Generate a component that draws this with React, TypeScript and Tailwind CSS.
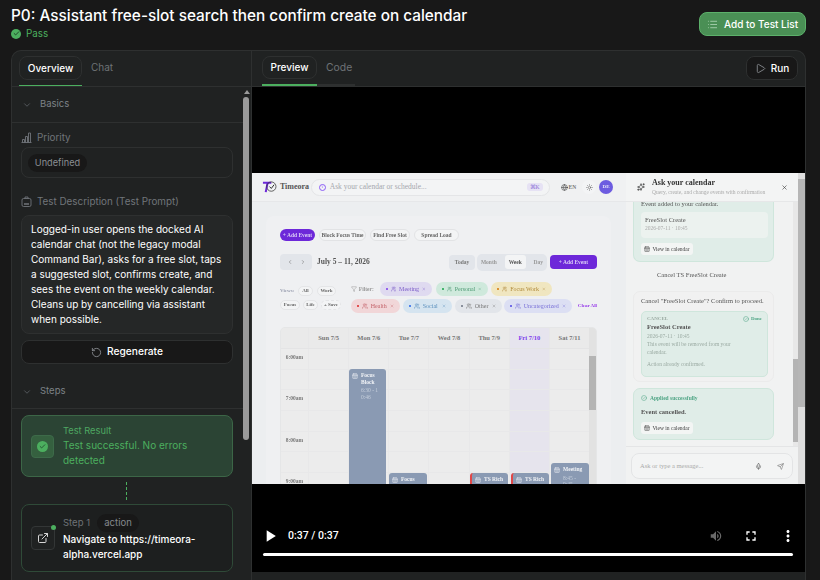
import { CalendarDays, Check, ChevronDown, ChevronLeft, ChevronRight, CircleCheck, ExternalLink, Filter, Globe, List, Mic, Play, RotateCw, Send, Sun, Users, X, Sparkles } from "lucide-react";
import { MdFullscreen, MdMoreVert, MdPlayArrow, MdVolumeUp } from "react-icons/md";
import type { ReactNode } from "react";

const sans = "font-['Inter','Liberation_Sans',sans-serif]";
const serif = "font-['Liberation_Serif',serif]";

function FilterPill({ label, className, dot }: { label: string; className: string; dot: string }) {
  return (
    <div className={`flex h-[14px] items-center gap-[3px] rounded-full px-[6px] text-[6px] ${className}`}>
      <span className={`size-[2px] rounded-full ${dot}`} />
      <Users className="size-[6px]" />
      <span className="flex-1 whitespace-nowrap">{label}</span>
      <X className="size-[4px]" />
    </div>
  );
}

function ViewPill({ label, className = "" }: { label: string; className?: string }) {
  return (
    <div className={`flex h-[10px] items-center justify-center rounded-full border border-[#e4e5e7] bg-[#f3f4f5] text-[5px] font-bold text-[#666] ${className}`}>
      {label}
    </div>
  );
}

function EventBlock({ title, time, className }: { title: string; time?: string; className: string }) {
  return (
    <div className={`absolute rounded-[3px] bg-[#8a9ab3] px-[3px] py-[3px] text-[5.5px] font-bold leading-[6.5px] text-[#f1f3f6] ${className}`}>
      <div className="flex gap-[3px]">
        <CalendarDays className="mt-[1px] size-[6px] shrink-0" />
        <div>
          {title}
          {time && <div className="mt-[2px] font-normal text-[#c5cedb]">{time}</div>}
        </div>
      </div>
    </div>
  );
}

function ViewInCalendar() {
  return (
    <div className="flex h-[12px] w-[52px] items-center justify-center gap-[2px] rounded-[3px] bg-[#f3f5f4] text-[5.5px] text-[#444]">
      <CalendarDays className="size-[6px]" />
      View in calendar
    </div>
  );
}

function CalendarGrid() {
  const days = ["Sun 7/5", "Mon 7/6", "Tue 7/7", "Wed 7/8", "Thu 7/9", "Fri 7/10", "Sat 7/11"];
  const hours = ["6:00am", "", "7:00am", "", "8:00am", "", "9:00am", ""];
  return (
    <div className="mt-[14px] flex h-[170px] w-[317px] overflow-hidden rounded-t-[5px] border border-[#e5e6e7] bg-[#ececec]">
      <div className="w-[310px]">
        <div className="grid h-[21px] grid-cols-[27px_repeat(7,1fr)] border-b border-[#e4e4e5] bg-[#eaeaea] text-center text-[6.5px] font-bold leading-[20px] text-[#777]">
          <div />
          {days.map((d) => (
            <div key={d} className={`border-l border-[#e7e7e8] whitespace-nowrap ${d === "Fri 7/10" ? "bg-[#e6e4ee] text-[#7c3aed]" : ""}`}>
              {d}
            </div>
          ))}
        </div>
        <div className="relative">
          {hours.map((h, i) => (
            <div key={i} className="grid h-[20.7px] grid-cols-[27px_repeat(7,1fr)] border-b border-[#e8e8e9]">
              <div className="text-center text-[5.5px] font-bold leading-[16px] text-[#777]">{h}</div>
              {days.map((d) => (
                <div key={d} className={`border-l border-[#e8e8e9] ${d === "Fri 7/10" ? "bg-[#e6e4ed]" : ""}`} />
              ))}
            </div>
          ))}
          <EventBlock title="Focus Block" time="6:30 - 1 0:46" className="left-[68px] top-[20px] h-[130px] w-[37px]" />
          <EventBlock title="Focus" className="left-[108px] top-[124px] h-[30px] w-[38px]" />
          <EventBlock title="TS Rich" className="left-[189px] top-[124px] h-[30px] w-[38px] border-l-2 border-l-[#e04848]" />
          <EventBlock title="TS Rich" className="left-[230px] top-[124px] h-[30px] w-[38px] border-l-2 border-l-[#e04848]" />
          <EventBlock title="Meeting" time="8:45 - 9:45" className="left-[270px] top-[114px] h-[40px] w-[38px]" />
        </div>
      </div>
      <div className="flex w-[7px] flex-col bg-[#e2e2e2] pt-[28px]">
        <div className="h-[54px] bg-[#b4b4b4]" />
      </div>
    </div>
  );
}

function CalendarMain() {
  return (
    <div className="flex w-[374px] flex-col bg-[#eceef0]">
      <div className="flex h-[29px] shrink-0 items-center border-b border-[#e6e7e9] bg-[#f0f1f2] pl-[10px] pr-[13px]">
        <svg viewBox="0 0 16 16" className="size-[15px]">
          <path d="M1 3h9M6 3L4 13" stroke="#6d28d9" strokeWidth="2.2" fill="none" />
          <circle cx="10" cy="7" r="5" stroke="#333" strokeWidth="0.8" fill="none" />
          <path d="M8 7l2 2 3-4" stroke="#222" strokeWidth="1" fill="none" />
        </svg>
        <span className="ml-[3px] w-[31px] text-[8px] font-bold text-[#555]">Timeora</span>
        <div className="flex h-[17px] w-[240px] items-center rounded-full border border-[#e4e5e7] bg-[#f3f4f5] pl-[7px] pr-[6px] text-[7.5px] text-[#a5a7ad]">
          <span className="flex size-[7px] items-center justify-center rounded-full border border-[#8b5cf6] text-[4px] text-[#7c3aed]">i</span>
          <span className="ml-[4px] flex-1">Ask your calendar or schedule...</span>
          <span className="rounded-[3px] bg-[#e6e2f4] px-[3px] text-[5.5px] text-[#8b6fd6]">⌘K</span>
        </div>
        <Globe className="ml-[11px] size-[7px] text-[#444]" />
        <span className="ml-[1px] text-[5.5px] font-bold text-[#777]">EN</span>
        <div className="ml-[6px] flex size-[14px] items-center justify-center rounded-full bg-[#f3f4f5]">
          <Sun className="size-[7px] text-[#666]" />
        </div>
        <div className="ml-[3px] flex size-[14px] items-center justify-center rounded-full bg-[#6d5ce0] text-[5px] font-bold text-[#e8e4fa]">DE</div>
      </div>
      <div className="ml-[14px] mt-[14px] h-[300px] w-[345px] rounded-[8px] bg-[#eff0f2] px-[14px] pt-[13px]">
        <div className="flex items-center gap-[4px] text-[5.5px] font-bold text-[#666]">
          <div className="flex h-[12px] w-[35px] items-center justify-center rounded-full bg-[#6d28d9] text-[#d9cbf6]">+ Add Event</div>
          <div className="flex h-[12px] w-[47px] items-center justify-center rounded-full border border-[#e2e3e5] bg-[#f3f4f5]">Block Focus Time</div>
          <div className="flex h-[12px] w-[40px] items-center justify-center rounded-full border border-[#e2e3e5] bg-[#f3f4f5]">Find Free Slot</div>
          <div className="flex h-[12px] w-[45px] items-center justify-center rounded-full border border-[#e2e3e5] bg-[#f3f4f5]">Spread Load</div>
        </div>
        <div className="mt-[13px] flex h-[16px] items-center">
          <div className="flex h-[16px] w-[32px] items-center justify-around rounded-[4px] bg-[#e2e5ea] px-[3px] text-[#666]">
            <ChevronLeft className="size-[6px]" />
            <ChevronRight className="size-[6px]" />
          </div>
          <span className="ml-[5px] text-[7.5px] font-bold text-[#555]">July 5 – 11, 2026</span>
          <div className="ml-auto flex h-[15px] w-[26px] items-center justify-center rounded-[4px] bg-[#e2e5ea] text-[5.5px] font-bold text-[#777]">Today</div>
          <div className="ml-[2px] flex h-[17px] w-[70px] items-center justify-around rounded-[5px] bg-[#e2e5ea] text-[5.5px] font-bold text-[#999]">
            <span>Month</span>
            <span className="rounded-[3px] bg-[#f3f4f5] px-[4px] py-[3px] text-[#555]">Week</span>
            <span>Day</span>
          </div>
          <div className="ml-[3px] flex h-[14px] w-[47px] items-center justify-center gap-[2px] rounded-[4px] bg-[#6d28d9] text-[5.5px] font-bold text-[#d9cbf6]">+ Add Event</div>
        </div>
        <div className="mt-[12px] flex">
          <div className="w-[72px] pt-[4px]">
            <div className="flex items-center gap-[4px]">
              <span className="w-[14px] text-[5px] font-bold text-[#9a9fb0]">Views:</span>
              <ViewPill label="All" className="w-[15px]" />
              <ViewPill label="Work" className="w-[19px]" />
            </div>
            <div className="mt-[4px] flex items-center gap-[3px]">
              <ViewPill label="Focus" className="w-[20px]" />
              <ViewPill label="Life" className="w-[15px]" />
              <ViewPill label="+ Save" className="w-[20px] border-dashed border-[#c9b8ee] text-[#8b5cf6]" />
            </div>
          </div>
          <div className="flex-1">
            <div className="flex items-center">
              <Filter className="size-[6px] text-[#999]" />
              <span className="ml-[2px] w-[21px] text-[5.5px] font-bold text-[#999]">Filter:</span>
              <FilterPill label="Meeting" dot="bg-[#7c3aed]" className="w-[52px] bg-[#dfdaf0] text-[#7c5cc9]" />
              <FilterPill label="Personal" dot="bg-[#16a34a]" className="ml-[4px] w-[52px] bg-[#cfe9dc] text-[#4f9b75]" />
              <FilterPill label="Focus Work" dot="bg-[#d97706]" className="ml-[3px] w-[61px] bg-[#f0e6c0] text-[#b08a3a]" />
            </div>
            <div className="mt-[3px] flex items-center">
              <FilterPill label="Health" dot="bg-[#dc2626]" className="w-[49px] bg-[#f1d6d8] text-[#c4636a]" />
              <FilterPill label="Social" dot="bg-[#2563eb]" className="ml-[3px] w-[49px] bg-[#d5e4f0] text-[#5b8fbd]" />
              <FilterPill label="Other" dot="bg-[#6b7280]" className="ml-[3px] w-[47px] bg-[#e2e5ea] text-[#777]" />
              <FilterPill label="Uncategorized" dot="bg-[#4f46e5]" className="ml-[2px] w-[68px] bg-[#dcdff3] text-[#7a72d8]" />
              <span className="ml-[6px] whitespace-nowrap text-[5px] font-bold text-[#9333ea]">Clear All</span>
            </div>
          </div>
        </div>
        <CalendarGrid />
      </div>
    </div>
  );
}

function ChatPanel() {
  return (
    <div className="flex w-[172px] flex-col bg-[#f1f2f2] text-[#555]">
      <div className="flex h-[29px] shrink-0 items-center border-b border-[#e6e7e8] bg-[#f3f4f4] pl-[11px] pr-[10px]">
        <Sparkles className="size-[8px] text-[#333]" />
        <div className="ml-[7px] flex-1">
          <div className="text-[8px] font-bold leading-[10px] text-[#333]">Ask your calendar</div>
          <div className="text-[5.5px] leading-[8px] text-[#aaa]">Query, create, and change events with confirmation</div>
        </div>
        <X className="size-[7px] text-[#333]" />
      </div>
      <div className="flex h-[245px] shrink-0 overflow-hidden border-b border-[#e4e5e6]">
        <div className="w-[167px] pl-[7px]">
          <div className="h-[60px] w-[141px] rounded-b-[7px] border border-t-0 border-[#cfe6dc] bg-[#e0ede8] px-[7px]">
            <div className="h-[10px] text-[6.5px] leading-[3px] text-[#555]">Event added to your calendar.</div>
            <div className="h-[26px] w-[127px] rounded-[4px] bg-[#ecf2ef] px-[4px] py-[4px] text-[6.5px] leading-[8px] text-[#555]">
              FreeSlot Create
              <div className="text-[5.5px] text-[#aaa]">2026-07-11 · 10:45</div>
            </div>
            <div className="mt-[5px]">
              <ViewInCalendar />
            </div>
          </div>
          <div className="mt-[9px] pl-[24px] text-[6.5px] leading-[8px]">Cancel TS FreeSlot Create</div>
          <div className="mt-[12px] h-[91px] w-[141px] rounded-[7px] border border-[#ebebeb] bg-[#f1f1f1] px-[7px] pt-[5px]">
            <div className="text-[6.5px] leading-[8px]">Cancel "FreeSlot Create"? Confirm to proceed.</div>
            <div className="mt-[6px] h-[66px] w-[127px] rounded-[5px] border border-[#cfe6dc] bg-[#e0ede8] px-[5px] pt-[3px] text-[5.5px] leading-[8px] text-[#9aaaa2]">
              <div className="flex items-center justify-between text-[5px] font-bold">
                CANCEL
                <span className="flex items-center gap-[2px] text-[#4fa585]">
                  <CircleCheck className="size-[6px]" />
                  Done
                </span>
              </div>
              <div className="text-[6.5px] font-bold text-[#555]">FreeSlot Create</div>
              <div className="mt-[1px]">2026-07-11 · 10:45</div>
              <div className="w-[92px]">This event will be removed from your calendar.</div>
              <div className="mt-[4px]">Action already confirmed.</div>
            </div>
          </div>
          <div className="mt-[6px] h-[52px] w-[141px] rounded-[7px] border border-[#cfe6dc] bg-[#e0ede8] px-[7px] pt-[5px]">
            <div className="flex items-center gap-[3px] text-[5.5px] font-bold leading-[8px] text-[#4fa585]">
              <CircleCheck className="size-[6px]" />
              Applied successfully
            </div>
            <div className="mt-[6px] text-[6.5px] font-bold leading-[8px] text-[#555]">Event cancelled.</div>
            <div className="mt-[6px]">
              <ViewInCalendar />
            </div>
          </div>
        </div>
        <div className="flex w-[5px] flex-col justify-end bg-[#e8e8e8] pb-[4px]">
          <div className="h-[83px] bg-[#b4b4b4]" />
        </div>
      </div>
      <div className="mx-[5px] mt-[6px] flex h-[26px] items-center rounded-[8px] border border-[#e3e4e5] bg-[#f3f4f4] pl-[8px] pr-[8px] text-[6.5px] text-[#aaa]">
        <span className="flex-1">Ask or type a message...</span>
        <Mic className="size-[7px] text-[#555]" />
        <Send className="ml-[15px] size-[7px] text-[#777]" />
      </div>
    </div>
  );
}

function VideoPlayer() {
  return (
    <div className="flex h-[485px] flex-col bg-black">
      <div className="mt-[86px] flex h-[311px] shrink-0 overflow-hidden">
        <div className={`flex h-[311px] w-[546px] blur-[0.6px] ${serif}`}>
          <CalendarMain />
          <ChatPanel />
        </div>
        <div className="flex w-[8px] flex-col bg-[#dedede] pt-[6px]">
          <div className="h-[228px] bg-[#b6b6b6]" />
        </div>
      </div>
      <div className="flex h-[88px] flex-col justify-end px-[11px] pb-[16px]">
        <div className="flex items-center text-white">
          <MdPlayArrow className="-ml-[3px] size-[20px]" />
          <span className="ml-[8px] font-['Roboto',sans-serif] text-[10.5px] font-medium">0:37 / 0:37</span>
          <MdVolumeUp className="ml-auto size-[14px] text-[#6a6a6a]" />
          <MdFullscreen className="ml-[20px] size-[16px]" />
          <MdMoreVert className="ml-[20px] -mr-[3px] size-[18px]" />
        </div>
        <div className="mt-[7px] h-[3px] w-[530px] rounded-full bg-white" />
      </div>
    </div>
  );
}

function SectionHead({ label }: { label: string }) {
  return (
    <div className="flex items-center gap-[8px] px-[10px] text-[9.5px] text-[#7d8287]">
      <ChevronDown className="size-[10px] text-[#5c6065]" />
      {label}
    </div>
  );
}

function FieldLabel({ icon, label }: { icon: ReactNode; label: string }) {
  return (
    <div className="flex items-center gap-[5px] text-[9.85px] leading-[16px] text-[#70757a]">
      {icon}
      {label}
    </div>
  );
}

function PriorityIcon() {
  return (
    <svg viewBox="0 0 11 11" className="size-[11px]" fill="none" stroke="currentColor" strokeWidth="0.9">
      <path d="M0.5 10.5h10" />
      <path d="M1.5 10.5V7.5h2v3M4.5 10.5V4.5h2v6M7.5 10.5V1h2v9.5" />
    </svg>
  );
}

function PromptIcon() {
  return (
    <svg viewBox="0 0 11 11" className="size-[11px]" fill="none" stroke="currentColor" strokeWidth="0.9">
      <rect x="1" y="2.5" width="9" height="8" rx="1.5" />
      <path d="M4 2.5V1h3v1.5" />
      <path d="M3 8h5" strokeWidth="1.6" />
    </svg>
  );
}

function LeftPanel() {
  return (
    <div className="flex w-[240px] shrink-0 flex-col border-r border-[#2e3030]">
      <div className="flex h-[36px] shrink-0 items-start gap-[9px] border-b border-[#2e3030] pl-[7px] pt-[5px]">
        <div className="relative flex h-[24px] w-[63px] items-center justify-center rounded-lg border border-[#2e3030] text-[10px] font-medium text-white">
          Overview
          <div className="absolute -bottom-[7px] -left-px -right-px h-[1px] bg-[#4caf5f]" />
        </div>
        <span className="pt-[4px] text-[10px] text-[#6e7276]">Chat</span>
      </div>
      <div className="flex min-h-0 flex-1">
        <div className="w-[231px] shrink-0">
          <div className="flex h-[36px] flex-col justify-center border-b border-[#2e3030]">
            <SectionHead label="Basics" />
          </div>
          <div className="pl-[9px] pr-[10px] pt-[6px]">
            <FieldLabel icon={<PriorityIcon />} label="Priority" />
            <div className="mt-[2px] flex h-[31px] items-center rounded-lg border border-[#2e3030] px-[6px]">
              <span className="flex h-[18px] w-[59px] items-center justify-center rounded-full bg-[#181818] text-[9.2px] text-[#8b8f93]">Undefined</span>
            </div>
            <div className="mt-[15px]">
              <FieldLabel icon={<PromptIcon />} label="Test Description (Test Prompt)" />
            </div>
            <div className="mt-[6px] h-[119px] rounded-lg border border-[#2e3030] bg-[#252727] px-[9px] py-[6px] text-[10px] leading-[15px] text-white">
              Logged-in user opens the docked AI calendar chat (not the legacy modal Command Bar), asks for a free slot, taps a suggested slot, confirms create, and sees the event on the weekly calendar. Cleans up by cancelling via assistant when possible.
            </div>
            <div className="mt-[6px] flex h-[24px] items-center justify-center gap-[5px] rounded-lg border border-[#2e3030] bg-[#181818] text-[10.2px] font-medium text-white">
              <RotateCw className="size-[11px] -scale-x-100 text-[#85898d]" />
              Regenerate
            </div>
          </div>
          <div className="mt-[11px] h-[34px]">
            <div className="flex h-[33px] items-center">
              <SectionHead label="Steps" />
            </div>
            <div className="h-px bg-[#2e3030]" />
          </div>
          <div className="pl-[9px] pr-[10px] pt-[6px]">
            <div className="flex h-[62px] items-center rounded-lg border border-[#3c6647] bg-[#2b4434] pl-[9px] pr-[8px]">
              <div className="flex size-[23px] shrink-0 items-center justify-center rounded-[4px] border border-[#3d6a49] bg-[#35603f]">
                <div className="flex size-[11px] items-center justify-center rounded-full bg-[#4caf5f]">
                  <Check className="size-[7px] text-[#245030]" strokeWidth={3} />
                </div>
              </div>
              <div className="ml-[9px]">
                <div className="text-[9.3px] leading-[14px] text-[#4ea862]">Test Result</div>
                <div className="w-[130px] text-[10px] leading-[15px] text-[#4caf5f]">Test successful. No errors detected</div>
              </div>
            </div>
            <div className="ml-[105px] mt-[5px] h-[18px] w-0 border-l border-dashed border-[#4caf5f]" />
            <div className="mt-[4px] flex h-[68px] items-center rounded-lg border border-[#2f4a38] bg-[#1d1f1f] pl-[9px] pr-[8px]">
              <div className="relative flex size-[24px] shrink-0 items-center justify-center rounded-[4px] border border-[#333636] bg-[#202222]">
                <ExternalLink className="size-[12px] text-[#d6d6d6]" />
                <div className="absolute -right-[2px] -top-[2px] size-[5px] rounded-full bg-[#4caf5f]" />
              </div>
              <div className="ml-[8px]">
                <div className="flex items-center gap-[7px] text-[9.5px] text-[#6e7276]">
                  Step 1
                  <span className="flex h-[18px] w-[42px] items-center justify-center rounded-full bg-[#181818] text-[#85898d]">action</span>
                </div>
                <div className="w-[140px] text-[10px] font-medium leading-[15px] text-white">Navigate to https://timeora-alpha.vercel.app</div>
              </div>
            </div>
          </div>
        </div>
        <div className="flex w-[8px] flex-col items-start">
          <div className="mt-[3px] ml-[1px] h-0 w-0 border-x-[3px] border-b-[4px] border-x-transparent border-b-[#9a9a9a]" />
          <div className="mt-[3px] h-[343px] w-[6px] rounded-[3px] bg-[#9a9a9a]" />
        </div>
      </div>
    </div>
  );
}

function RightPanel() {
  return (
    <div className="flex min-w-0 flex-1 flex-col">
      <div className="flex h-[36px] shrink-0 items-start justify-between border-b border-[#2e3030] pl-[10px] pr-[7px] pt-[5px]">
        <div className="relative flex items-start gap-[9px]">
          <div className="flex h-[23px] w-[55px] items-center justify-center rounded-lg border border-[#2e3030] text-[10px] font-medium text-white">Preview</div>
          <span className="pt-[4px] text-[10.4px] text-[#6e7276]">Code</span>
          <div className="absolute -bottom-[7px] left-0 h-[2px] w-[93px] bg-[#2e3030]" />
          <div className="absolute -bottom-[7px] left-0 h-[2px] w-[55px] bg-[#4caf5f]" />
        </div>
        <div className="flex h-[24px] w-[52px] items-center justify-center gap-[5px] rounded-lg border border-[#2e3030] bg-[#181818] text-[10px] font-medium text-white">
          <Play className="size-[11px] text-[#85898d]" />
          Run
        </div>
      </div>
      <VideoPlayer />
    </div>
  );
}

export default function App() {
  return (
    <div className={`flex h-[580px] w-[820px] flex-col overflow-hidden bg-[#181818] ${sans}`}>
      <div className="flex h-[50px] shrink-0 items-start justify-between pl-[11px] pr-[14px]">
        <div className="pt-[6px]">
          <h1 className="text-[15.33px] font-medium leading-[20px] text-white">P0: Assistant free-slot search then confirm create on calendar</h1>
          <div className="flex items-center gap-[5px] text-[9.8px] leading-[15px] text-[#4caf5f]">
            <span className="flex size-[10px] items-center justify-center rounded-full bg-[#4caf5f]">
              <Check className="size-[7px] text-[#1d3a24]" strokeWidth={3} />
            </span>
            Pass
          </div>
        </div>
        <div className="mt-[12px] flex h-[24px] w-[107px] items-center justify-center gap-[6px] whitespace-nowrap rounded-lg border border-[#5cb06a] bg-[#4a8f55] text-[10px] font-medium text-white">
          <List className="size-[11px] text-[#a5cfac]" />
          Add to Test List
        </div>
      </div>
      <div className="ml-[11px] flex h-[540px] w-[795px] shrink-0 overflow-hidden rounded-t-[10px] border border-b-0 border-[#2e3030] bg-[#202222]">
        <LeftPanel />
        <RightPanel />
      </div>
    </div>
  );
}
